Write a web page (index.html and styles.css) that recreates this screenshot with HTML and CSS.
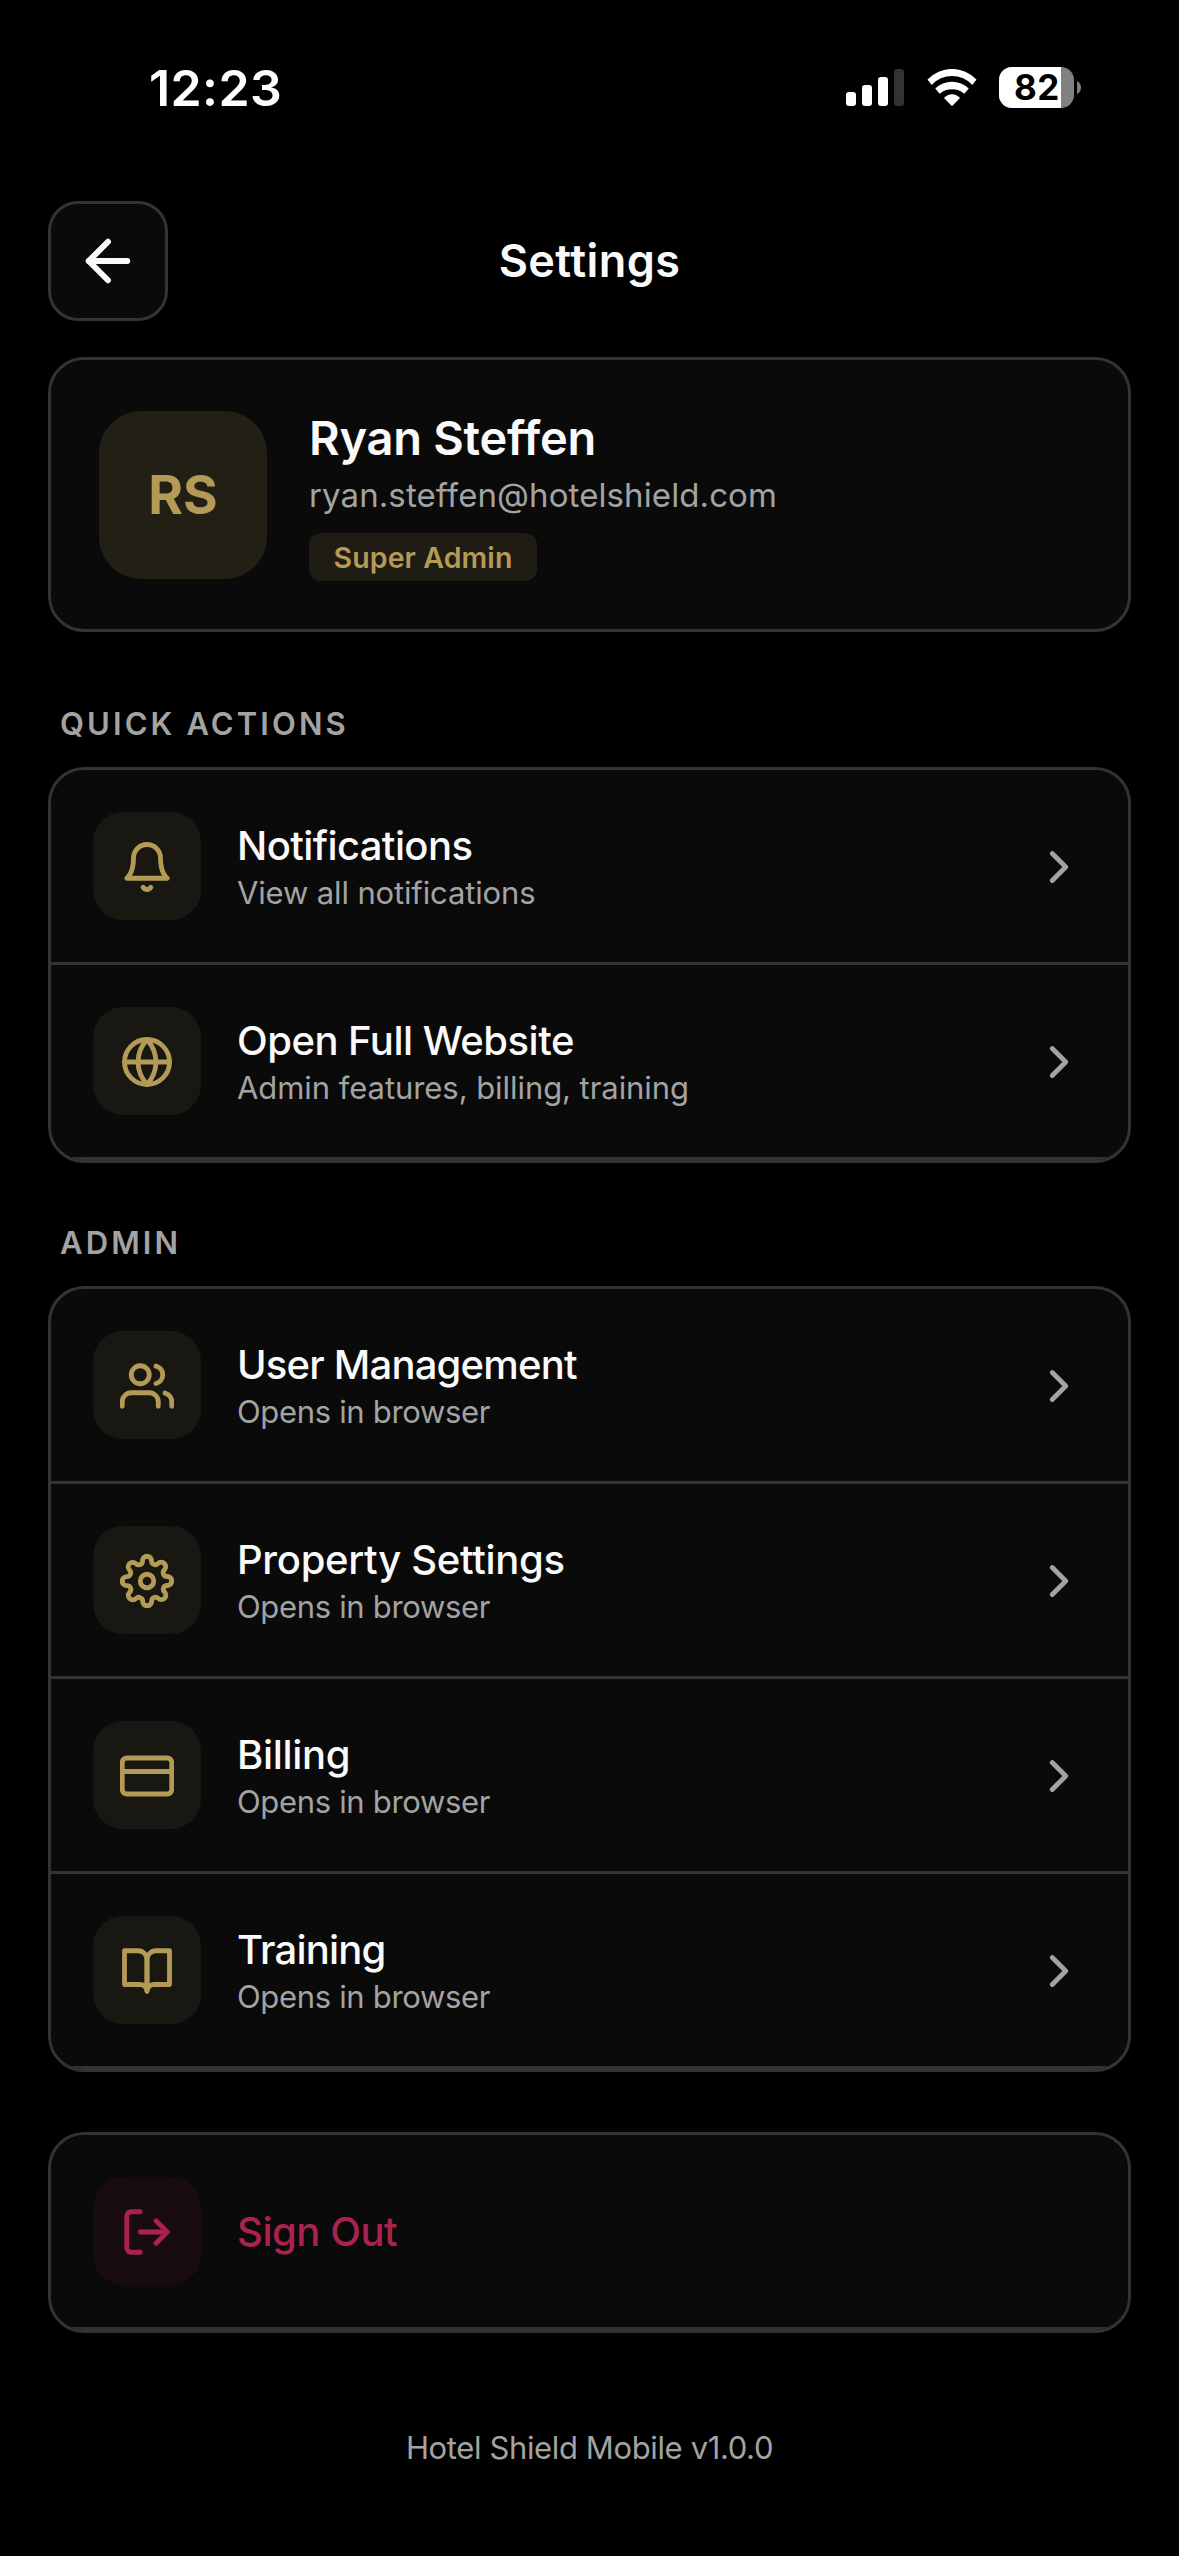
FILE: index.html
```html
<!DOCTYPE html>
<html lang="en">
<head>
<meta charset="utf-8">
<title>Settings</title>
<link rel="stylesheet" href="styles.css">
</head>
<body>
<svg class="sprite" aria-hidden="true">
  <symbol id="chevron" viewBox="0 0 24 24"><polyline points="9 18 15 12 9 6"/></symbol>
</svg>

<div class="status-bar">
  <span class="time">12:23</span>
  <div class="status-icons">
    <svg class="signal" viewBox="0 0 58 37">
      <rect x="0" y="23" width="10" height="14" rx="3"/>
      <rect x="16" y="16" width="10" height="21" rx="3"/>
      <rect x="32" y="8" width="10" height="29" rx="3"/>
      <rect class="signal-off" x="48" y="0" width="10" height="37" rx="3"/>
    </svg>
    <svg class="wifi" viewBox="0 0 50 37">
      <path d="M.5 10.6A33.4 33.4 0 0 1 49.5 10.6L45.3 15.9A27.6 27.6 0 0 0 4.7 15.9Z"/>
      <path d="M8.3 19.5A23.9 23.9 0 0 1 41.7 19.5L37.3 24.7A19.4 19.4 0 0 0 12.7 24.7Z"/>
      <path d="M17 29A10.5 10.5 0 0 1 33 29L25 37.2Z"/>
    </svg>
    <div class="battery"><span class="battery-level">82</span></div>
    <svg class="battery-cap" viewBox="0 0 4 13"><path d="M0 0C2.4 .8 4 3.4 4 6.500S2.400 12.200 0 13Z"/></svg>
  </div>
</div>

<main class="screen">
  <header class="header">
    <button class="back" aria-label="Back">
      <svg class="icon icon-back" viewBox="0 0 24 24"><line x1="19" y1="12" x2="5" y2="12"/><polyline points="12 19 5 12 12 5"/></svg>
    </button>
    <h1 class="title">Settings</h1>
  </header>

  <section class="card profile">
    <div class="avatar">RS</div>
    <div class="profile-text">
      <div class="name">Ryan Steffen</div>
      <div class="email">ryan.steffen@hotelshield.com</div>
      <div class="badge">Super Admin</div>
    </div>
  </section>

  <h2 class="label label-first">QUICK ACTIONS</h2>
  <section class="card">
    <div class="row notifications">
      <div class="tile"><svg class="icon" viewBox="0 0 24 24"><path d="M18 8A6 6 0 0 0 6 8c0 7-3 9-3 9h18s-3-2-3-9"/><path d="M13.73 21a2 2 0 0 1-3.46 0"/></svg></div>
      <div class="row-text"><div class="row-title">Notifications</div><div class="row-sub">View all notifications</div></div>
      <svg class="icon chevron"><use href="#chevron"/></svg>
    </div>
    <div class="row website">
      <div class="tile"><svg class="icon" viewBox="0 0 24 24"><circle cx="12" cy="12" r="10"/><line x1="2" y1="12" x2="22" y2="12"/><path d="M12 2a15.300 15.300 0 0 1 4 10 15.300 15.300 0 0 1-4 10 15.300 15.300 0 0 1-4-10 15.300 15.300 0 0 1 4-10z"/></svg></div>
      <div class="row-text"><div class="row-title">Open Full Website</div><div class="row-sub">Admin features, billing, training</div></div>
      <svg class="icon chevron"><use href="#chevron"/></svg>
    </div>
  </section>

  <h2 class="label">ADMIN</h2>
  <section class="card">
    <div class="row users">
      <div class="tile"><svg class="icon" viewBox="0 0 24 24"><path d="M17 21v-2a4 4 0 0 0-4-4H5a4 4 0 0 0-4 4v2"/><circle cx="9" cy="7" r="4"/><path d="M23 21v-2a4 4 0 0 0-3-3.870"/><path d="M16 3.130a4 4 0 0 1 0 7.750"/></svg></div>
      <div class="row-text"><div class="row-title">User Management</div><div class="row-sub">Opens in browser</div></div>
      <svg class="icon chevron"><use href="#chevron"/></svg>
    </div>
    <div class="row property">
      <div class="tile"><svg class="icon" viewBox="0 0 24 24"><circle cx="12" cy="12" r="3"/><path d="M19.4 15a1.65 1.65 0 0 0 .33 1.82l.06.06a2 2 0 0 1 0 2.83 2 2 0 0 1-2.83 0l-.06-.06a1.65 1.65 0 0 0-1.82-.33 1.65 1.65 0 0 0-1 1.51V21a2 2 0 0 1-2 2 2 2 0 0 1-2-2v-.09A1.65 1.65 0 0 0 9 19.4a1.65 1.65 0 0 0-1.82.33l-.06.06a2 2 0 0 1-2.83 0 2 2 0 0 1 0-2.83l.06-.06a1.65 1.65 0 0 0 .33-1.82 1.65 1.65 0 0 0-1.51-1H3a2 2 0 0 1-2-2 2 2 0 0 1 2-2h.09A1.65 1.65 0 0 0 4.600 9a1.65 1.65 0 0 0-.33-1.82l-.06-.06a2 2 0 0 1 0-2.83 2 2 0 0 1 2.83 0l.06.06a1.65 1.65 0 0 0 1.820.33H9a1.65 1.65 0 0 0 1-1.51V3a2 2 0 0 1 2-2 2 2 0 0 1 2 2v.09a1.65 1.65 0 0 0 1 1.51 1.65 1.65 0 0 0 1.82-.33l.06-.06a2 2 0 0 1 2.83 0 2 2 0 0 1 0 2.83l-.06.06a1.65 1.65 0 0 0-.33 1.82V9a1.65 1.65 0 0 0 1.51 1H21a2 2 0 0 1 2 2 2 2 0 0 1-2 2h-.09a1.65 1.65 0 0 0-1.51 1z"/></svg></div>
      <div class="row-text"><div class="row-title">Property Settings</div><div class="row-sub">Opens in browser</div></div>
      <svg class="icon chevron"><use href="#chevron"/></svg>
    </div>
    <div class="row billing">
      <div class="tile"><svg class="icon" viewBox="0 0 24 24"><rect x="1" y="4" width="22" height="16" rx="2"/><line x1="1" y1="10" x2="23" y2="10"/></svg></div>
      <div class="row-text"><div class="row-title">Billing</div><div class="row-sub">Opens in browser</div></div>
      <svg class="icon chevron"><use href="#chevron"/></svg>
    </div>
    <div class="row training">
      <div class="tile"><svg class="icon" viewBox="0 0 24 24"><path d="M2 3h6a4 4 0 0 1 4 4v14a3 3 0 0 0-3-3H2z"/><path d="M22 3h-6a4 4 0 0 0-4 4v14a3 3 0 0 1 3-3h7z"/></svg></div>
      <div class="row-text"><div class="row-title">Training</div><div class="row-sub">Opens in browser</div></div>
      <svg class="icon chevron"><use href="#chevron"/></svg>
    </div>
  </section>

  <section class="card card-signout">
    <div class="row signout">
      <div class="tile"><svg class="icon" viewBox="0 0 24 24"><path d="M9 21H5a2 2 0 0 1-2-2V5a2 2 0 0 1 2-2h4"/><polyline points="16 17 21 12 16 7"/><line x1="21" y1="12" x2="9" y2="12"/></svg></div>
      <div class="row-title">Sign Out</div>
    </div>
  </section>

  <footer class="version">Hotel Shield Mobile v1.0.0</footer>
</main>
</body>
</html>
```

FILE: styles.css
```css
* { box-sizing: border-box; margin: 0; padding: 0; }

body {
  min-height: 2556px;
  background: #000;
  color: #fafafa;
  font-family: Inter, "Liberation Sans", sans-serif;
  font-weight: 400;
}

.sprite { display: none; }

/* Status bar */
.status-bar {
  display: flex;
  justify-content: space-between;
  align-items: flex-start;
  height: 201px;
  padding: 67px 98px 0 149px;
  color: #fff;
}
.time { font-size: 50px; font-weight: 600; line-height: 42px; letter-spacing: .4px; }
.status-icons { display: flex; align-items: center; height: 41px; fill: #fff; }
.signal { width: 58px; height: 37px; }
.signal-off { fill: #333; }
.wifi { width: 50px; height: 37px; margin-left: 23px; }
.battery {
  width: 75px;
  height: 41px;
  margin-left: 22px;
  border-radius: 13px;
  overflow: hidden;
  background: #808080;
}
.battery-level {
  display: block;
  width: 62px;
  height: 41px;
  padding-left: 15px;
  background: #fff;
  color: #000;
  font-size: 35px;
  font-weight: 700;
  line-height: 41px;
  letter-spacing: .4px;
}
.battery-cap { width: 4px; height: 13px; margin-left: 3px; fill: #808080; }

/* Icons */
.icon {
  flex: none;
  width: 54px;
  height: 54px;
  margin-top: 1px;
  fill: none;
  stroke: currentColor;
  stroke-width: 2.15;
  stroke-linecap: round;
  stroke-linejoin: round;
}
.icon-back { width: 66px; height: 66px; margin-top: 0; }
.chevron { color: #a3a3a3; }

/* Header */
.screen { padding: 0 48px; }
.header {
  display: grid;
  grid-template-columns: 120px 1fr 120px;
  align-items: center;
  margin-bottom: 36px;
}
.back {
  display: flex;
  align-items: center;
  justify-content: center;
  width: 120px;
  height: 120px;
  border: 3px solid #333;
  border-radius: 30px;
  background: #0a0a0a;
  color: #fafafa;
}
.title { font-size: 45px; font-weight: 600; line-height: 60px; letter-spacing: .4px; text-align: center; }

/* Cards */
.card {
  border: 3px solid #333;
  border-radius: 36px;
  overflow: hidden;
  background: #0a0a0a;
}
.profile { display: flex; align-items: center; gap: 42px; height: 275px; padding: 0 48px; }
.avatar {
  display: flex;
  align-items: center;
  justify-content: center;
  width: 168px;
  height: 168px;
  padding-top: 1px;
  border-radius: 42px;
  background: #222015;
  color: #b39a56;
  font-size: 53px;
  font-weight: 700;
}
.name { font-size: 47px; font-weight: 600; line-height: 60px; letter-spacing: -.25px; }
.email { color: #a3a3a3; font-size: 33px; line-height: 54px; letter-spacing: .1px; }
.badge {
  width: 228px;
  height: 48px;
  margin-top: 11px;
  border-radius: 12px;
  background: #1f1c14;
  color: #b39a56;
  font-size: 28.5px;
  font-weight: 600;
  line-height: 49px;
  letter-spacing: .1px;
  text-align: center;
}

.label {
  margin: 62px 0 25px;
  padding-left: 12px;
  color: #a3a3a3;
  font-size: 31px;
  font-weight: 600;
  line-height: 36px;
  letter-spacing: 3.1px;
}
.label-first { margin-top: 74px; }

/* Rows */
.row {
  display: flex;
  align-items: center;
  height: 195px;
  padding: 0 42px;
  border-bottom: 3px solid #333;
}
.tile {
  display: flex;
  flex: none;
  align-items: center;
  justify-content: center;
  width: 108px;
  height: 108px;
  margin-right: 36px;
  border-radius: 30px;
  background: #181711;
  color: #b39a56;
}
.row-text { flex: 1; padding-top: 5px; }
.row-title { font-size: 40px; font-weight: 500; line-height: 48px; letter-spacing: -.5px; }
.row-sub { color: #a3a3a3; font-size: 31px; line-height: 45px; letter-spacing: -.33px; }

.notifications .row-title { letter-spacing: -.6px; }
.notifications .row-sub { letter-spacing: -.14px; }
.website .row-sub { letter-spacing: -.06px; }
.users .row-title, .training .row-title { letter-spacing: -.8px; }
.property .row-title { letter-spacing: -.3px; }
.billing .row-title { letter-spacing: -.3px; }

.card-signout { margin-top: 60px; }
.signout { color: #ab234d; }
.signout .row-title { padding-top: 2px; letter-spacing: -.45px; }
.signout .tile { background: #180c10; color: inherit; }

.version {
  margin-top: 95px;
  color: #a3a3a3;
  font-size: 31px;
  line-height: 40px;
  letter-spacing: -.37px;
  text-align: center;
}
```
